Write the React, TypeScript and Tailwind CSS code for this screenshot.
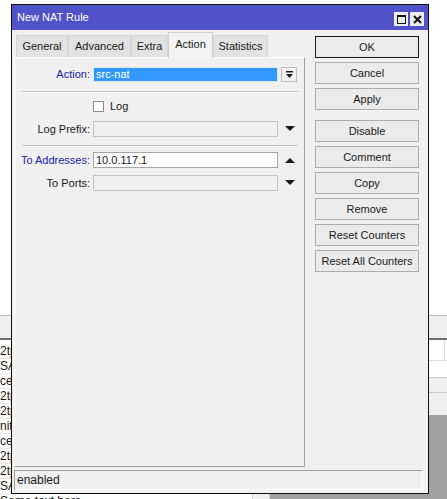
import React from "react";

const font = { fontFamily: '"Liberation Sans", Arial, sans-serif' };

const listRows = ["2tp", "SA", "ce", "2tp", "2tp", "niti", "ce", "2tp", "2tp", "SA", "Some text here"];

const buttons = [
  { label: "OK", def: true, gap: false },
  { label: "Cancel", def: false, gap: false },
  { label: "Apply", def: false, gap: false },
  { label: "Disable", def: false, gap: true },
  { label: "Comment", def: false, gap: false },
  { label: "Copy", def: false, gap: false },
  { label: "Remove", def: false, gap: false },
  { label: "Reset Counters", def: false, gap: false },
  { label: "Reset All Counters", def: false, gap: false },
];

const tabs = [
  { label: "General", w: "w-[52px]" },
  { label: "Advanced", w: "w-[63px]" },
  { label: "Extra", w: "w-[37px]" },
  { label: "Action", w: "w-[45px]", active: true },
  { label: "Statistics", w: "w-[55px]" },
];

function TriangleDown() {
  return (
    <svg width="10" height="6" viewBox="0 0 10 6">
      <polygon points="0,0 10,0 5,5" fill="#1a1a1a" />
    </svg>
  );
}

function TriangleUp() {
  return (
    <svg width="10" height="6" viewBox="0 0 10 6">
      <polygon points="0,6 10,6 5,1" fill="#1a1a1a" />
    </svg>
  );
}

function Separator() {
  return <div className="ml-[7px] w-[276px] border-t border-b border-t-[#c4c4c4] border-b-white" />;
}

function FieldRow({
  label,
  blue,
  value,
  enabled,
  icon,
  className,
}: {
  label: string;
  blue?: boolean;
  value?: string;
  enabled?: boolean;
  icon: React.ReactNode;
  className: string;
}) {
  return (
    <div className={`flex h-[16px] items-center ${className}`}>
      <span className={`w-[75px] text-right ${blue ? "text-[#2121a8]" : "text-[#1a1a1a]"}`}>{label}</span>
      <div
        className={`ml-[3px] flex h-[16px] w-[185px] items-center border px-[2px] ${
          enabled ? "border-[#a5a5a5] bg-white" : "border-[#c2c2c2] bg-[#f0f0f0]"
        }`}
      >
        {value}
      </div>
      <div className="ml-[3px] flex w-[18px] items-center justify-center">{icon}</div>
    </div>
  );
}

export default function App() {
  return (
    <div className="relative h-[499px] w-[447px] overflow-hidden bg-white text-[11px] text-[#1a1a1a]" style={font}>
      {/* desktop behind the dialog */}
      <div className="flex h-full flex-col">
        <div className="h-[315px] shrink-0 bg-white" />
        <div className="h-[23px] shrink-0 border-t border-[#bdbdbd] bg-[#f0f0f0]" />
        <div className="h-[2px] shrink-0 bg-[#6e6e6e]" />
        <div className="flex min-h-0 flex-1">
          <div className="w-[252px] bg-white pt-[4px] text-[12px]">
            {listRows.map((r, i) => (
              <div key={i} className="flex h-[15px] items-center border-b border-[#e6e6e6] pl-0 leading-none">
                {r}
              </div>
            ))}
          </div>
          <div className="w-[18px] border-l border-r border-[#d4d4d4] bg-[#f0f0f0]" />
          <div className="flex flex-1 flex-col bg-[#a0a0a0]">
            <div className="flex h-[21px] border-b border-[#dedede] bg-white">
              <div className="flex-1" />
              <div className="w-[3px] border-l border-[#dedede]" />
            </div>
            <div className="h-[16px] bg-white" />
            <div className="h-[15px] border-t border-[#c8c8c8] bg-[#f0f0f0]" />
            <div className="h-[23px] border-t border-[#c8c8c8] bg-[#f0f0f0]" />
          </div>
        </div>
      </div>

      {/* dialog window */}
      <div className="absolute left-[11px] top-[4px] flex h-[490px] w-[418px] flex-col border border-[#111] bg-[#f0f0f0]">
        <div className="flex h-[25px] shrink-0 items-center bg-[#4f53c7] pl-[5px] pr-[4px] text-white">
          <span className="pb-[1px]">New NAT Rule</span>
          <div className="ml-auto flex gap-[2px] pt-[3px]">
            <div className="flex h-[14px] w-[14px] items-center justify-center bg-[#ececec]">
              <div className="h-[9px] w-[9px] border border-t-2 border-[#111]" />
            </div>
            <div className="flex h-[14px] w-[14px] items-center justify-center bg-[#ececec]">
              <svg width="9" height="9" viewBox="0 0 9 9">
                <path d="M1 1 L8 8 M8 1 L1 8" stroke="#111" strokeWidth="2" />
              </svg>
            </div>
          </div>
        </div>

        <div className="flex h-[437px] shrink-0">
          <div className="ml-[2px] flex w-[291px] flex-col">
            <div className="flex h-[27px] items-end pl-[2px]">
              {tabs.map((t) =>
                t.active ? (
                  <div
                    key={t.label}
                    className={`${t.w} relative top-[1px] flex h-[26px] items-center justify-center border border-b-0 border-[#cfcfcf] bg-[#f3f3f3] pb-[2px]`}
                  >
                    {t.label}
                  </div>
                ) : (
                  <div
                    key={t.label}
                    className={`${t.w} flex h-[22px] items-center justify-center border border-b-0 border-[#d6d6d6] bg-[#e2e2e2]`}
                  >
                    {t.label}
                  </div>
                )
              )}
            </div>
            <div className="flex h-[410px] flex-col border border-b-[#a0a0a0] border-l-white border-r-[#a0a0a0] border-t-white">
              <div className="mt-[9px] flex h-[15px] items-center">
                <span className="w-[75px] text-right text-[#2121a8]">Action:</span>
                <div className="ml-[3px] flex h-[15px] w-[185px] items-center border border-[#d8e8f8] bg-[#3399ff] px-[2px] text-white">
                  src-nat
                </div>
                <div className="ml-[3px] flex h-[15px] w-[16px] items-center justify-center border border-[#bcbcbc] bg-[#f4f4f4]">
                  <svg width="9" height="9" viewBox="0 0 9 9">
                    <rect x="1" y="1" width="7" height="1.5" fill="#1a1a1a" />
                    <polygon points="1,4 8,4 4.5,8" fill="#1a1a1a" />
                  </svg>
                </div>
              </div>
              <div className="mt-[9px]">
                <Separator />
              </div>
              <div className="mt-[8px] flex h-[11px] items-center">
                <div className="ml-[78px] h-[11px] w-[11px] border border-[#8a8a8a] bg-white" />
                <span className="ml-[6px]">Log</span>
              </div>
              <FieldRow label="Log Prefix:" icon={<TriangleDown />} className="mt-[9px]" />
              <div className="mt-[8px]">
                <Separator />
              </div>
              <FieldRow
                label="To Addresses:"
                blue
                enabled
                value="10.0.117.1"
                icon={<TriangleUp />}
                className="mt-[5px]"
              />
              <FieldRow label="To Ports:" icon={<TriangleDown />} className="mt-[7px]" />
            </div>
          </div>

          <div className="ml-[10px] flex w-[104px] flex-col pt-[6px]">
            {buttons.map((b) => (
              <div
                key={b.label}
                className={`flex h-[22px] items-center justify-center border ${
                  b.def ? "border-[#1a1a1a]" : "border-[#adadad]"
                } bg-[#ebebeb] ${b.gap ? "mt-[10px]" : b.def ? "" : "mt-[4px]"}`}
              >
                {b.label}
              </div>
            ))}
          </div>
        </div>

        <div className="ml-[2px] mt-[3px] flex h-[20px] w-[409px] items-center border border-b-white border-l-[#a0a0a0] border-r-white border-t-[#a0a0a0] pl-[2px] text-[12px]">
          enabled
        </div>
      </div>
    </div>
  );
}
